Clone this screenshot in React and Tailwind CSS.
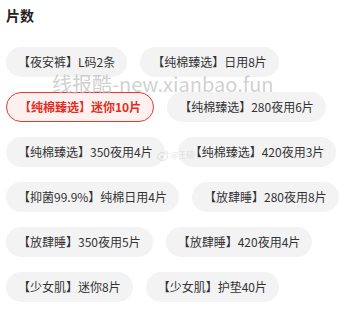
import React from "react";

const options = [
  { label: "【夜安裤】L码2条" },
  { label: "【纯棉臻选】日用8片" },
  { label: "【纯棉臻选】迷你10片", active: true },
  { label: "【纯棉臻选】280夜用6片" },
  { label: "【纯棉臻选】350夜用4片" },
  { label: "【纯棉臻选】420夜用3片" },
  { label: "【抑菌99.9%】纯棉日用4片" },
  { label: "【放肆睡】280夜用8片" },
  { label: "【放肆睡】350夜用5片" },
  { label: "【放肆睡】420夜用4片" },
  { label: "【少女肌】迷你8片" },
  { label: "【少女肌】护垫40片" },
];

export default function App() {
  return (
    <div
      className="relative w-[358px] h-[328px] bg-white px-[6px] pt-[5px]"
      style={{ fontFamily: '"Noto Sans CJK SC", "Noto Sans", sans-serif' }}
    >
      <h2 className="text-[14px] leading-[20px] font-bold text-[#222]">片数</h2>
      <div className="mt-[22px] flex flex-wrap gap-x-[13px] gap-y-[15px]">
        {options.map((o) =>
          o.active ? (
            <div
              key={o.label}
              className="h-[30px] px-3 flex items-center rounded-full border border-[#e4392d] bg-[#fff1ef] text-[12px] font-bold text-[#e02e24] whitespace-nowrap"
            >
              {o.label}
            </div>
          ) : (
            <div
              key={o.label}
              className="h-[30px] px-3 flex items-center rounded-full bg-[#f3f3f4] text-[12px] text-[#333] whitespace-nowrap"
            >
              {o.label}
            </div>
          )
        )}
      </div>

      {/* watermark */}
      <div className="absolute left-[52px] top-[72px] text-[20px] leading-[24px] text-[#bdbdbd]/70 pointer-events-none whitespace-nowrap">
        线报酷-new.xianbao.fun
      </div>
      <div className="absolute left-[157px] top-[149px] flex items-center gap-[2px] pointer-events-none opacity-40">
        <svg width="12" height="11" viewBox="0 0 12 11">
          <ellipse cx="5.5" cy="6.5" rx="5" ry="4" fill="none" stroke="#bbb" strokeWidth="1" />
          <circle cx="5" cy="7" r="1.6" fill="#bbb" />
          <path d="M8.5 1.5a2.5 2.5 0 0 1 2.5 2.5" fill="none" stroke="#bbb" strokeWidth="0.9" />
        </svg>
        <span className="text-[8px] text-[#bbb]">@王硕</span>
      </div>
    </div>
  );
}
